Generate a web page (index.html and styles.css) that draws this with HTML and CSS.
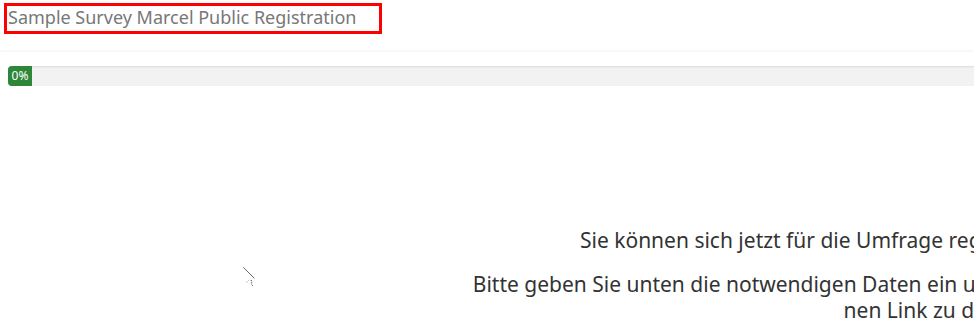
FILE: index.html
```html
<!DOCTYPE html>
<html lang="de">
<head>
    <meta charset="UTF-8">
    <meta name="viewport" content="width=device-width, initial-scale=1.0">
    <title>Sample Survey Marcel Public Registration</title>
    <link rel="stylesheet" href="styles.css">
</head>
<body>
    <div class="navbar">
        <span class="brand">Sample Survey Marcel Public Registration</span>
    </div>

    <div class="progress">
        <div class="progress-bar" style="width: 24px;">0%</div>
    </div>

    <div class="register">
        <p>Sie können sich jetzt für die Umfrage registrieren, wenn Sie gern teilnehmen möchten.</p>
        <p>Bitte geben Sie unten die notwendigen Daten ein und Sie erhalten danach schnell eine weitere E-Mail, die ei-<br>nen Link zu der Umfrage enthält.</p>
    </div>

    <!-- leftover mouse pointer trace -->
    <svg class="pointer" width="16" height="22" viewBox="0 0 16 22">
        <path d="M0.5 0.5 L11.5 11.5" stroke="#111" stroke-width="1" stroke-dasharray="1 0.4" fill="none"/>
        <path d="M3 16 L6 13" stroke="#ccc" stroke-width="1" fill="none"/>
        <path d="M8 13 L9 15 L8 17 L10 19" stroke="#333" stroke-width="1" stroke-dasharray="1 1" fill="none"/>
    </svg>
</body>
</html>
```

FILE: styles.css
```css
html, body {
    overflow: hidden;
}
body {
    font-family: "Noto Sans", sans-serif;
    margin: 0;
    background-color: #fff;
    color: #333;
}
.navbar {
    height: 50px;
    padding: 3px 4px 0;
    box-sizing: border-box;
    box-shadow: 0 1px 3px rgba(0, 0, 0, 0.06);
}
.brand {
    display: inline-block;
    width: 371px;
    height: 25px;
    border: 3px solid #f00;
    padding: 0 0 0 1px;
    font-size: 18px;
    line-height: 22px;
    color: #777;
}
.progress {
    display: flex;
    height: 20px;
    margin: 16px 0 0 8px;
    width: 1200px;
    background-color: #f2f2f2;
    border-radius: 4px;
    box-shadow: inset 0 1px 2px rgba(0, 0, 0, 0.1);
}
.progress-bar {
    background-color: #2e8639;
    color: #fff;
    font-size: 12px;
    line-height: 20px;
    text-align: center;
    border-radius: 4px 0 0 4px;
}
.register {
    width: 1100px;
    margin: 141px 0 0 456px;
    text-align: center;
    white-space: nowrap;
    font-size: 21px;
    line-height: 26px;
}
.register p {
    margin: 0 0 18px;
}
.pointer {
    position: absolute;
    left: 243px;
    top: 267px;
}
```
